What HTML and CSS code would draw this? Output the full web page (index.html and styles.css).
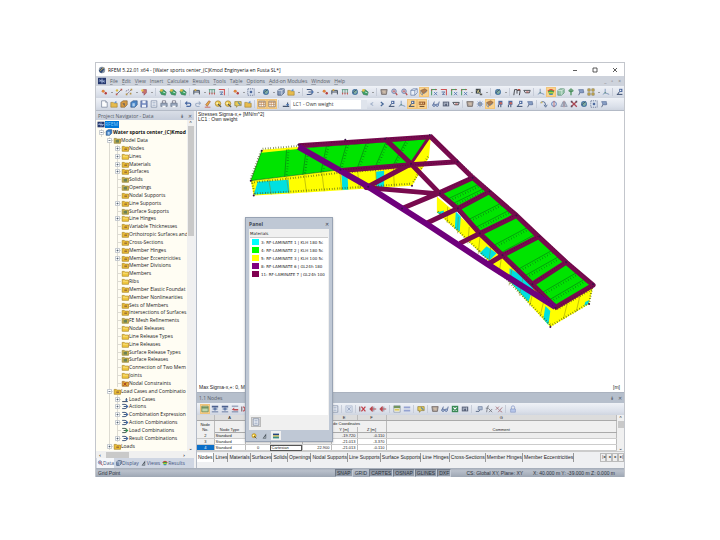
FILE: index.html
```html
<!DOCTYPE html>
<html lang="en">
<head>
<meta charset="utf-8">
<title>RFEM</title>
<link rel="stylesheet" href="styles.css">
</head>
<body>
<svg class="defs" aria-hidden="true">
  <symbol id="node" viewBox="0 0 10 10"><path d="M2 4l3-1 2 3" stroke="#aab" fill="none"/><circle cx="4" cy="4" r="1.8" fill="#e07a28"/><circle cx="7.200" cy="6.500" r="1.500" fill="#b02c2c"/></symbol>
  <symbol id="line" viewBox="0 0 10 10"><path d="M2 8L8 2" stroke="#6b6f78" stroke-width="1.200"/><circle cx="2.500" cy="3" r="1.500" fill="#d9b430"/><path d="M1 7h2v2H1zM7 1h2v2H7z" fill="#b84a3c"/></symbol>
  <symbol id="linedash" viewBox="0 0 10 10"><path d="M2 8L8 2M1 4l4-2" stroke="#657" stroke-dasharray="2 1"/><path d="M1 7h2v2H1zM7 1h2v2H7zM6 6h2v2H6z" fill="#b08a34"/></symbol>
  <symbol id="surf" viewBox="0 0 10 10"><path d="M4 2h4v4L5 9V6H3z" fill="#c8685a" stroke="#8b3b53" stroke-width=".8"/><circle cx="3" cy="3" r="1.500" fill="#e8c33a"/></symbol>
  <symbol id="green" viewBox="0 0 10 10"><path d="M1 4l4-2 4 3-1 4-5-1z" fill="#2f9a58" stroke="#20624a" stroke-width=".7"/><circle cx="3" cy="3" r="1.700" fill="#e6ba36"/><path d="M5 5l3 1" stroke="#fff" stroke-width=".8"/></symbol>
  <symbol id="member" viewBox="0 0 10 10"><path d="M1 8V3h7v5M1 5h7" stroke="#33404f" stroke-width="1.200" fill="none"/><circle cx="3" cy="2.500" r="1.300" fill="#dba52c"/></symbol>
  <symbol id="load" viewBox="0 0 10 10"><path d="M1 2h8M2 2v5M5 2v5M8 2v5" stroke="#3f8a68" stroke-width="1" fill="none"/><path d="M1 6h2L2 9zM4 6h2L5 9zM7 6h2L8 9z" fill="#c04444"/></symbol>
  <symbol id="box" viewBox="0 0 10 10"><path d="M1 3l3-2h5v5L6 9H1z" fill="#7d93b4" stroke="#304468" stroke-width=".9"/><path d="M1 3h5v6M6 3l3-2" stroke="#fff" stroke-width=".7" fill="none"/></symbol>
  <symbol id="wire" viewBox="0 0 10 10"><path d="M1 3l3-2h5v5L6 9H1zM1 3h5v6M6 3l3-2" stroke="#5872a0" stroke-width=".9" fill="#eef3fa"/></symbol>
  <symbol id="globe" viewBox="0 0 10 10"><circle cx="5" cy="5" r="3.700" fill="#33669a"/><path d="M2 4l4-2 2 3-3 3z" fill="#79a99b"/><path d="M2 6l5-4" stroke="#173354"/></symbol>
  <symbol id="logo" viewBox="0 0 10 10"><circle cx="5" cy="5" r="4" fill="#8b97a6"/><path d="M1 6l4-4 3 2-4 5z" fill="#2f4a75"/><path d="M3 6l4-4" stroke="#d8b24a" stroke-width="1.200"/></symbol>
  <symbol id="folder" viewBox="0 0 10 10"><path d="M1 3h3l1 1h4v5H1z" fill="#e7b73c" stroke="#94711c" stroke-width=".7"/><path d="M5 3l3-2v3" fill="#4e86c4"/></symbol>
  <symbol id="doc" viewBox="0 0 10 10"><path d="M2 1h5l2 2v6H2z" fill="#fff" stroke="#5e6b85" stroke-width=".8"/><path d="M7 1v2h2" fill="none" stroke="#5e6b85" stroke-width=".6"/></symbol>
  <symbol id="sheet" viewBox="0 0 10 10"><path d="M1.500 1h7v8h-7z" fill="#f5f7fb" stroke="#607090" stroke-width=".8"/><path d="M3 3h4M3 5h4M3 7h4" stroke="#7f92b4" stroke-width=".8"/></symbol>
  <symbol id="sel" viewBox="0 0 10 10"><path d="M1 1h8v8H1z" fill="#dfe6f1" stroke="#4a5c82" stroke-dasharray="1.500 1"/><path d="M3.500 3.500h3v3h-3z" fill="#3d5c96"/></symbol>
  <symbol id="cubeo" viewBox="0 0 10 10"><path d="M1 3l3-2h5v5L6 9H1z" fill="#d69330" stroke="#78501d" stroke-width=".8"/><path d="M3 4h3v4" fill="#5e554c"/></symbol>
  <symbol id="cubeb" viewBox="0 0 10 10"><path d="M1 3l3-2h5v5L6 9H1z" fill="#397bc4" stroke="#224776" stroke-width=".8"/><path d="M3 4h3v4H3z" fill="#acd0f0"/></symbol>
  <symbol id="cubeg" viewBox="0 0 10 10"><path d="M1 3l3-2h5v5L6 9H1z" fill="#8fc3a4" stroke="#3c7c5c" stroke-width=".8"/><path d="M1 3h5v6M6 3l3-2" stroke="#fff" stroke-width=".7" fill="none"/></symbol>
  <symbol id="save" viewBox="0 0 10 10"><path d="M1 1h8v8H1z" fill="#667fbb" stroke="#3e5288" stroke-width=".7"/><path d="M3 1h4v3H3zM2.500 6h5v3h-5z" fill="#edf1fa"/></symbol>
  <symbol id="print" viewBox="0 0 10 10"><path d="M3 1h4v3H3z" fill="#fff" stroke="#667"/><path d="M1 4h8v4H1z" fill="#91a0b8" stroke="#4d5b72" stroke-width=".7"/><path d="M3 7h4v2H3z" fill="#fff"/></symbol>
  <symbol id="undo" viewBox="0 0 10 10"><path d="M2 4h4.500q2 0 2 2t-2 2H3" stroke="#385b9b" stroke-width="1.500" fill="none"/><path d="M4 1L1 4l3 3z" fill="#385b9b"/></symbol>
  <symbol id="redo" viewBox="0 0 10 10"><path d="M8 4H4Q2 4 2 6t2 2h3" stroke="#9aaac4" stroke-width="1.300" fill="none"/><path d="M6 1l3 3-3 3z" fill="#9aaac4"/></symbol>
  <symbol id="pencil" viewBox="0 0 10 10"><path d="M2 6l4-5 2 1-4 6z" fill="#e7a632" stroke="#9b4b2b" stroke-width=".8"/><path d="M1 9h7" stroke="#c6423a" stroke-width="1"/></symbol>
  <symbol id="palette" viewBox="0 0 10 10"><circle cx="5" cy="4.500" r="3.500" fill="#efc73a" stroke="#9b7422" stroke-width=".8"/><path d="M5 5l4 4" stroke="#474747" stroke-width="1.400"/><circle cx="4" cy="4" r="1.200" fill="#fff5c4"/></symbol>
  <symbol id="note" viewBox="0 0 10 10"><path d="M1 2h8v5H5L3 9V7H1z" fill="#e7c847" stroke="#806c22" stroke-width=".8"/><path d="M5 3l3 3" stroke="#3577b5" stroke-width="1.300"/></symbol>
  <symbol id="table" viewBox="0 0 10 10"><path d="M1 1.500h8v7H1z" fill="#fff" stroke="#6c5f58" stroke-width=".9"/><path d="M1 3h8M1 5.500h8M4 2v6M7 2v6" stroke="#b07546" stroke-width=".8"/></symbol>
  <symbol id="tableg" viewBox="0 0 10 10"><path d="M1 1.500h8v7H1z" fill="#b8d8b0" stroke="#4f7a4c" stroke-width=".9"/><path d="M1 3.500h8" stroke="#4f7a4c" stroke-width="1.500"/></symbol>
  <symbol id="tablein" viewBox="0 0 10 10"><path d="M1 1h8v2H1zM1 8h8v1H1z" fill="#3b5284"/><path d="M2 5h6M5 3v4" stroke="#35558f" stroke-width="1.500"/></symbol>
  <symbol id="tabledel" viewBox="0 0 10 10"><path d="M1 1h8v1H1zM1 8h8v1H1z" fill="#445982"/><path d="M1 6l3-3v2h5v2H4z" fill="#bc3c40"/></symbol>
  <symbol id="lens" viewBox="0 0 10 10"><circle cx="5" cy="4" r="2.800" fill="#d9e7f5" stroke="#4b659a"/><path d="M7 6l2 3" stroke="#b33a3b" stroke-width="1.500"/><path d="M3 4h4M5 2v4" stroke="#b33" stroke-width=".8"/></symbol>
  <symbol id="hand" viewBox="0 0 10 10"><path d="M1 2h8L8 8H2z" fill="#a89a90" stroke="#504640" stroke-width=".8"/><path d="M3 4h4M4 6h3" stroke="#e8d0b0"/></symbol>
  <symbol id="view" viewBox="0 0 10 10"><path d="M1 3l5-2 3 2-5 4z" fill="#a9764a" stroke="#704525" stroke-width=".7"/><path d="M1 3v4l2 2V6M5 7l4-3" stroke="#6880a8" fill="none"/></symbol>
  <symbol id="axisx" viewBox="0 0 10 10"><path d="M2 9V2h6" stroke="#3e9955" stroke-width="1.300" fill="none"/><path d="M5 5l4 4M9 5L5 9" stroke="#3b65a8" stroke-width="1"/><path d="M1 3l1-2 1 2M7 1l2 1-2 1" fill="#b33"/></symbol>
  <symbol id="axisz" viewBox="0 0 10 10"><path d="M1 2h7v7" stroke="#c44" stroke-width="1.300" fill="none"/><path d="M2 5h4L3 8h3" stroke="#35558f" stroke-width="1" fill="none"/></symbol>
  <symbol id="axes" viewBox="0 0 10 10"><path d="M4 1v5l5 2M4 6L1 8" stroke="#7791b8" stroke-width="1.200" fill="none"/><circle cx="4" cy="6" r="1" fill="#587"/></symbol>
  <symbol id="contrast" viewBox="0 0 10 10"><path d="M1 1h6v6H1z" fill="#262f37"/><path d="M2 3l5 4M5 2L3 6" stroke="#e9dc8b"/><path d="M6 7h3v2H6z" fill="#444"/></symbol>
  <symbol id="rainbow" viewBox="0 0 10 10"><path d="M1 4q4-4 8 0L7 8H3z" fill="#2da44e"/><path d="M1 4q4-4 8 0" stroke="#d73b31" stroke-width="1.500" fill="none"/><path d="M2 6h6" stroke="#e9dc34" stroke-width="1.300"/><path d="M3 8h4" stroke="#2977d0" stroke-width="1.200"/></symbol>
  <symbol id="plant" viewBox="0 0 10 10"><path d="M5 9V2M2 3l3 2 3-2" stroke="#39874c" stroke-width="1.600" fill="none"/><path d="M3 2l2-1 2 1" fill="#39874c" stroke="#39874c"/></symbol>
  <symbol id="results" viewBox="0 0 10 10"><path d="M1 8h4l3-5" stroke="#50607e" stroke-width="1.200" fill="none"/><path d="M4 2h5v4H4z" fill="#a9b8d0" stroke="#5d7094" stroke-width=".8"/></symbol>
  <symbol id="support" viewBox="0 0 10 10"><path d="M4 1h4v4H4z" fill="#3d5c96"/><path d="M5 2l2 1-2 1" fill="#fff"/><path d="M1 8h7M4 5L2 8" stroke="#273c60" stroke-width="1.200"/></symbol>
  <symbol id="supportr" viewBox="0 0 10 10"><path d="M3 1h5v5H3z" fill="#3d5c96"/><circle cx="6" cy="4" r="1.600" fill="#c25a50"/><path d="M3 6v3M6 6v3" stroke="#273c60" stroke-width="1.200"/></symbol>
  <symbol id="struct" viewBox="0 0 10 10"><path d="M2 9l2-4M5 5h4" fill="none" stroke="#3e4f70"/><path d="M2 2h6v4H4z" fill="#7f97c0" stroke="#43598a" stroke-width=".7"/></symbol>
  <symbol id="values" viewBox="0 0 10 10"><path d="M1 2h8v4H1z" fill="#8f4d22"/><path d="M2 4h6" stroke="#ffe5a5" stroke-dasharray="1 1" stroke-width="2"/><path d="M2 8h6" stroke="#503928" stroke-width="1.300"/></symbol>
  <symbol id="frame" viewBox="0 0 10 10"><path d="M1 9L2 2h3v5M5 3h4L8 9" stroke="#34373e" stroke-width="1.200" fill="none"/><path d="M6 2h3" stroke="#bc4033" stroke-width="1.500"/></symbol>
  <symbol id="span" viewBox="0 0 10 10"><path d="M1 3h8M1 3l2 3h5l1-3" stroke="#40434a" stroke-width="1.200" fill="none"/><path d="M4 5h3" stroke="#bc4033" stroke-width="1.200"/></symbol>
  <symbol id="prev" viewBox="0 0 10 10"><path d="M6.500 3L3.500 5l3 2" stroke="#9fafc8" stroke-width="1.400" fill="none"/></symbol>
  <symbol id="next" viewBox="0 0 10 10"><path d="M3.500 2.500l3 2.500-3 2.500" stroke="#35598e" stroke-width="1.500" fill="none"/></symbol>
  <symbol id="xred" viewBox="0 0 10 10"><path d="M1.500 1.500l7 7M8.500 1.500l-7 7" stroke="#a73744" stroke-width="1.600"/><path d="M1 1h2v2H1zM7 1h2v2H7zM1 7h2v2H1z" fill="#4d3949"/></symbol>
  <symbol id="rowx" viewBox="0 0 10 10"><path d="M1 2v6" stroke="#6a4a50" stroke-width="1.300"/><path d="M3 2l5 6M8 2L3 8" stroke="#bd2b35" stroke-width="1.500"/></symbol>
  <symbol id="rowl" viewBox="0 0 10 10"><path d="M1 5l3-3v6zM3 5h6" fill="#b5343c" stroke="#b5343c" stroke-width="1.200"/><path d="M6 2v6" stroke="#778"/></symbol>
  <symbol id="colx" viewBox="0 0 10 10"><path d="M1 1h8v8H1z" fill="#d5ddeb" stroke="#a6b2c8" stroke-width=".8"/><path d="M3 3l4 4M7 3L3 7" stroke="#8797b5"/></symbol>
  <symbol id="rotate" viewBox="0 0 10 10"><path d="M1 4q0-2 3-2t3 5M5 6l2 3 2-3" stroke="#405a83" stroke-width="1.100" fill="none"/><circle cx="2" cy="3" r="1.200" fill="#c9b25a"/></symbol>
  <symbol id="target" viewBox="0 0 10 10"><circle cx="5" cy="5" r="3" fill="none" stroke="#5579b8" stroke-width="1.200"/><path d="M5 1v8" stroke="#b64d4c"/></symbol>
  <symbol id="cross" viewBox="0 0 10 10"><path d="M5 1v8M1 5h8M2 2l6 6M8 2L2 8" stroke="#5579b8" stroke-width=".9"/><circle cx="5" cy="5" r="1.500" fill="#fff" stroke="#345"/></symbol>
  <symbol id="mirror" viewBox="0 0 10 10"><path d="M5 1v8" stroke="#a44"/><path d="M4 2L1 8h3zM6 2l3 6H6z" fill="#cbd4e1" stroke="#66758f" stroke-width=".8"/></symbol>
  <symbol id="card" viewBox="0 0 10 10"><path d="M1 1h8v8H1z" fill="#f8f7e7" stroke="#74869f" stroke-width=".8"/><path d="M1 1h8v3H1z" fill="#668c4f"/><path d="M2 6h6" stroke="#dac64c" stroke-width="2"/></symbol>
  <symbol id="palt" viewBox="0 0 10 10"><path d="M1 1h3v3H1zM6 1h3v3H6zM1 6h3v3H1zM6 6h3v3H6z" fill="#d5b13c" stroke="#6d6440" stroke-width=".7"/></symbol>
  <symbol id="rows" viewBox="0 0 10 10"><path d="M1 2h8v2H1zM1 6h8v2H1z" fill="#8d9ccf"/></symbol>
  <symbol id="excel" viewBox="0 0 10 10"><path d="M1 1h8v8H1z" fill="#278044"/><path d="M3 3l4 4M7 3L3 7" stroke="#fff" stroke-width="1.300"/></symbol>
  <symbol id="glasses" viewBox="0 0 10 10"><path d="M1 7l2-5M8 6l1-4M4 6h1" stroke="#334d83"/><circle cx="2.500" cy="6.500" r="1.500" fill="#ccdcf4" stroke="#334d83"/><circle cx="6.500" cy="6.500" r="1.500" fill="#ccdcf4" stroke="#334d83"/></symbol>
  <symbol id="calc" viewBox="0 0 10 10"><path d="M1 2h8v6H1z" fill="#49536b"/><path d="M2 4h4M2 6h2M7 3v4" stroke="#d9e1ef"/></symbol>
  <symbol id="fx" viewBox="0 0 10 10"><path d="M5 1q-2 0-2 2L2 9M1 4h4M5 5l4 4M9 5L5 9" stroke="#63666f" stroke-width="1" fill="none"/></symbol>
  <symbol id="fxr" viewBox="0 0 10 10"><path d="M1 2l4 4M5 2L1 6M9 3L4 9M6 7l3 2" stroke="#a2626c" stroke-width="1" fill="none"/></symbol>
  <symbol id="lock" viewBox="0 0 10 10"><path d="M3 5V3q0-2 2-2t2 2v2" stroke="#8395c8" fill="none"/><path d="M2 5h6v4H2z" fill="#b3c4eb" stroke="#7488bd" stroke-width=".7"/></symbol>
  <symbol id="comb" viewBox="0 0 10 10"><path d="M1 2h4q3 0 3 3t-3 3H1M3 5h6" stroke="#334b76" stroke-width="1.300" fill="none"/><path d="M7 3l3 2-3 2z" fill="#3d6bb0"/></symbol>
  <symbol id="combg" viewBox="0 0 10 10"><path d="M1 2h4q3 0 3 3t-3 3H1M3 5h6" stroke="#3b5148" stroke-width="1.300" fill="none"/><path d="M6 3l4 2-4 2z" fill="#29974b"/></symbol>
  <symbol id="case" viewBox="0 0 10 10"><path d="M1 8h8M7 3v4" stroke="#35455f" stroke-width="1.400"/><path d="M5 5h4L7 8z" fill="#3768ab"/></symbol>
  <symbol id="app" viewBox="0 0 10 10"><path d="M0 1h10v8H0z" fill="#25386f"/><path d="M1 5h8M5 2v6M2 3l2 2M8 7L6 5" stroke="#b9cbed"/></symbol>
  <symbol id="foldy" viewBox="0 0 10 10"><path d="M1 2h3l1 1h5v6H1z" fill="#f0c73f" stroke="#a47e1a" stroke-width=".9"/><path d="M2 4h7v1H2z" fill="#fbe798"/></symbol>
  <symbol id="foldi" viewBox="0 0 10 10"><path d="M1 2h3l1 1h5v6H1z" fill="#eabb35" stroke="#a07a1a" stroke-width=".9"/><path d="M4 5h4v2H4z" fill="#9a6d35"/></symbol>
  <symbol id="foldg" viewBox="0 0 10 10"><path d="M1 2h3l1 1h5v6H1z" fill="#d0b548" stroke="#8c792d" stroke-width=".9"/><path d="M3 4h5v4H3z" fill="#6b8157"/></symbol>
  <symbol id="foldx" viewBox="0 0 10 10"><path d="M1 2h3l1 1h5v6H1z" fill="#e2a832" stroke="#9a5e1a" stroke-width=".9"/><path d="M3 4l4 4M7 4L3 8" stroke="#9c2b22" stroke-width="1.300"/></symbol>
  <symbol id="flag" viewBox="0 0 10 10"><path d="M0 1h10v3H0z" fill="#26457e"/><path d="M0 4h10v2H0z" fill="#e0c43d"/><path d="M0 6h10v3H0z" fill="#3e8d83"/></symbol>
  <symbol id="scale" viewBox="0 0 10 10"><path d="M1 9L7 1v8z" fill="#4a545d"/><path d="M3 8h3V5z" fill="#c8d0d8"/></symbol>
</svg>

<main class="window">
  <header class="title">
    <svg class="i"><use href="#logo"/></svg>
    <h1>RFEM 5.22.01 x64 - [Water sports center_(C)Kmod Enginyeria en Fusta SL*]</h1>
    <div class="wbtns">
      <button aria-label="Minimize"><svg viewBox="0 0 8 8"><path d="M2 4.500h4"/></svg></button>
      <button aria-label="Maximize"><svg viewBox="0 0 8 8"><path d="M2 2h4v4H2z"/></svg></button>
      <button aria-label="Close"><svg viewBox="0 0 8 8"><path d="M2 2l4 4M6 2L2 6"/></svg></button>
    </div>
  </header>
  <nav class="menu">
    <svg class="i"><use href="#app"/></svg>
    <button><u>F</u>ile</button><button><u>E</u>dit</button><button><u>V</u>iew</button><button><u>I</u>nsert</button><button><u>C</u>alculate</button><button><u>R</u>esults</button><button><u>T</u>ools</button><button>Ta<u>b</u>le</button><button><u>O</u>ptions</button><button><u>A</u>dd-on Modules</button><button><u>W</u>indow</button><button><u>H</u>elp</button>
    <span class="mdi"><span>_</span><span>▫</span><span>×</span></span>
  </nav>
  <div class="bar" data-icons="node v line linedash v surf v | green green green | member v load axisz | node v sel v globe v box folder v | comb v node member load globe green v | hand lens lens wire view* axisx axisz axisx axisx v contrast v | globe v | frame span | axes rainbow* cubeg plant struct palt v axes | support"></div>
  <div class="bar">
    <span class="part" data-icons="doc folder cubeo cubeb save sheet print print | undo redo pencil palette palette note folder | table* table* | case"></span>
    <select aria-label="Load case"><option>LC1 - Own weight</option></select>
    <span class="part" data-icons="prev next support axes support* values* | glasses calc span | hand cross view* supportr supportr support struct | rotate target mirror xred globe sel struct"></span>
  </div>

  <div class="work">
    <aside class="nav">
      <div class="cap"><h2>Project Navigator - Data</h2><span class="pin">⇟</span><span>✕</span></div>
      <div class="treebox">
        <ul class="tree" id="tree"></ul>
        <div class="vscroll"><b>⌃</b><i></i><b>⌄</b></div>
      </div>
      <div class="hscroll"><b>‹</b><i></i><b>›</b></div>
      <div class="navtabs">
        <button class="on"><svg class="i"><use href="#lens"/></svg>Data</button><button><svg class="i"><use href="#box"/></svg>Display</button><button><svg class="i"><use href="#scale"/></svg>Views</button><button><svg class="i"><use href="#rainbow"/></svg>Results</button>
      </div>
    </aside>

    <section class="right">
      <div class="view">
        <p class="info">Stresses Sigma-x,+ [MN/m^2]<br>LC1 : Own weight</p>
        <svg class="model" viewBox="196 110 429 276" role="img" aria-label="Structure model">
          <g class="yel">
            <path d="M250 180L340 169L411 163L412 185L290 193L253 195z"/>
            <path d="M409 163L431 135L429 157L412 185z"/>
            <path d="M437 196L480 233L505 256L533 285L556 308L594 286L590 304L551 327L528 302L507 278L480 252L457 230L437 212z"/>
          </g>
          <g class="cya">
            <path d="M253 194L257 181L288 179L289 192z"/><path d="M341 171L347 170L348 189L342 189z"/><path d="M376 171L384 170L384 186L376 187z"/>
            <path d="M437 212L444 210L444 216zM456 211L461 216L460 231L455 228zM487 246L497 253L490 260L480 253zM510 268L524 276L534 287L529 302L510 281zM546 306L551 311L549 325L544 319z"/>
            <path d="M586 302L590 300L589 304L585 306z"/>
          </g>
          <g class="gre">
            <path d="M261 150L427 138L411 163L340 169L250 180z"/><path d="M441 193L473 178L592 285L555 307z"/>
          </g>
          <path class="yel" d="M262 149L300 146V148L261 152z"/>
          <g id="hatch"></g>
          <g class="mag">
            <path d="M298 145L430 136M338 170L411 164L458 161M385 138L411 163L440 193L458 208L480 233L503 255L533 284L556 307"/>
            <path class="thin" d="M430 135L411 163"/>
            <path d="M411 163L366 187L437 193M430 135L473 177L517 215L540 237L567 262L594 285L555 308M402 208L440 192L473 177M426 223L458 208L490 191M460 243L480 233L517 215M488 264L503 255L540 236M533 284L567 262"/>
          </g>
          <path class="pur" d="M298 146L368 186L426 223L488 264L556 307"/>
          <g id="ticks"></g>
        </svg>
        <div class="foot"><span>Max Sigma-x,+: 0, Min Sigma-x,+: 0</span><span>[m]</span></div>
      </div>

      <section class="tbl">
        <div class="cap"><h2>1.1 Nodes</h2><span class="pin">⇟</span><span>✕</span></div>
        <div class="bar short" data-icons="tableg* tablein tablein tabledel rowx tabledel rowx tablein table rows card rows rows sheet | colx | rowx rowl rowl | card rows | note | hand glasses excel calc | results fx fxr | lock"></div>
        <div class="gridwrap">
          <table>
            <colgroup><col class="c0"><col class="c1"><col class="c2"><col class="c3"><col class="c4"><col class="c5"><col class="c6"><col></colgroup>
            <thead>
              <tr class="abc"><th></th><th>A</th><th>B</th><th>C</th><th>D</th><th>E</th><th>F</th><th>G</th></tr>
              <tr class="top"><th rowspan="2">Node<br>No.</th><th></th><th></th><th></th><th colspan="3" class="nc">Node Coordinates</th><th></th></tr>
              <tr class="top"><th>Node Type</th><th></th><th></th><th></th><th>Y [m]</th><th>Z [m]</th><th>Comment</th></tr>
            </thead>
            <tbody>
              <tr class="alt"><th>2</th><td>Standard</td><td></td><td></td><td></td><td class="n">-19.720</td><td class="n">-0.110</td><td></td></tr>
              <tr><th>3</th><td>Standard</td><td></td><td></td><td></td><td class="n">-21.013</td><td class="n">-3.370</td><td></td></tr>
              <tr><th class="cur">4</th><td>Standard</td><td class="m">0</td><td class="box">Cartesian</td><td class="n">22.900</td><td class="n">-21.013</td><td class="n">-0.110</td><td></td></tr>
            </tbody>
          </table>
          <div class="vscroll"><b>⌃</b><i></i><b>⌄</b></div>
        </div>
        <div class="tabs">
          <button class="on">Nodes</button><button>Lines</button><button>Materials</button><button>Surfaces</button><button>Solids</button><button>Openings</button><button>Nodal Supports</button><button>Line Supports</button><button>Surface Supports</button><button>Line Hinges</button><button>Cross-Sections</button><button>Member Hinges</button><button>Member Eccentricities</button>
          <span class="step"><button aria-label="First">|◂</button><button aria-label="Previous">◂</button><button aria-label="Next">▸</button><button aria-label="Last">▸|</button></span>
        </div>
      </section>
    </section>

    <section class="panel">
      <div class="phead"><h2>Panel</h2><span>✕</span></div>
      <div class="pbody">
        <h3>Materials</h3>
        <ul>
          <li><i class="k1"></i>3: RF-LAMINATE 1 | KLH 180 5c</li>
          <li><i class="k2"></i>4: RF-LAMINATE 2 | KLH 180 5c</li>
          <li><i class="k3"></i>5: RF-LAMINATE 3 | KLH 100 5c</li>
          <li><i class="k4"></i>8: RF-LAMINATE 6 | GL24h 180</li>
          <li><i class="k5"></i>11: RF-LAMINATE 7 | GL24h 100</li>
        </ul>
        <button class="opt" aria-label="Options"><svg class="i"><use href="#sheet"/></svg></button>
      </div>
      <div class="ptabs"><button aria-label="Colors"><svg class="i"><use href="#palette"/></svg></button><button aria-label="Factors"><svg class="i"><use href="#scale"/></svg></button><button class="on" aria-label="Filter"><svg class="i"><use href="#flag"/></svg></button></div>
    </section>
  </div>

  <footer class="status">
    <span class="hint">Grid Point</span>
    <span class="snaps"><button>SNAP</button><button class="off">GRID</button><button>CARTES</button><button>OSNAP</button><button>GLINES</button><button>DXF</button></span>
    <span class="cs">CS: Global XY, Plane: XY</span>
    <span class="xyz">X: 40.000 m Y: -39.000 m Z: 0.000 m</span>
  </footer>
</main>
<script src="app.js"></script>
</body>
</html>
```
FILE: styles.css
```css
* { box-sizing: border-box; }
body { margin: 0; padding: 62px 95px; background: #fff; font: 5px/6px "Open Sans", "Noto Sans", sans-serif; color: #333; }
h1, h2, h3, p, ul { margin: 0; padding: 0; font: inherit; list-style: none; }
button, select { font: inherit; color: inherit; border: 0; padding: 0; margin: 0; background: none; }
.defs { position: absolute; width: 0; height: 0; }
.i { width: 8px; height: 8px; flex: none; display: block; }

.window { border: 1px solid #c3c6cc; border-bottom: 0; background: #eff0f2; }
.title { display: flex; align-items: center; height: 13px; padding: 0 2px 0 2px; gap: 2px; background: #fff; color: #111; }
.title h1 { flex: 1; white-space: nowrap; }
.wbtns { display: flex; gap: 12px; padding-right: 3px; }
.wbtns button { display: block; width: 8px; height: 8px; }
.wbtns svg { display: block; fill: none; stroke: #333; stroke-width: .8; }
.menu { display: flex; align-items: center; height: 10px; padding-left: 2px; gap: 4px; background: #ced3dc; color: #555b66; }
.menu button { white-space: nowrap; }
.menu u { text-decoration-thickness: 1px; text-decoration-color: #9aa0aa; text-underline-offset: 1px; }
.mdi { margin-left: auto; display: flex; gap: 5px; padding-right: 3px; color: #777; }

.bar { display: flex; align-items: center; height: 12px; padding-left: 3px; overflow: hidden; background: linear-gradient(#eff2f7, #dbe0ea 70%, #cfd5e0); }
.bar .i { opacity: .9; }
.part { display: flex; align-items: center; }
.bar button { width: 10px; height: 10px; display: grid; place-items: center; flex: none; }
.bar button.hot { background: #fbd28c; box-shadow: inset 0 0 0 1px #f0c47a; }
.bar .v { width: 5px; height: 5px; flex: none; display: grid; place-items: center; }
.bar .v::before { content: ""; border: 1px solid transparent; border-top-color: #555; border-bottom: 0; }
.bar .s { width: 4px; height: 8px; flex: none; background: linear-gradient(90deg, transparent 1px, #c6ccd8 1px 2px, transparent 2px); }
.bar select { width: 76px; height: 9px; padding: 0 2px; background: #fff linear-gradient(#dfe4ec, #dfe4ec) right / 6px 100% no-repeat; appearance: none; color: #333; }

.work { display: flex; position: relative; border-top: 1px solid #b3bac6; }
.nav { width: 98px; flex: none; display: flex; flex-direction: column; }
.cap { display: flex; align-items: center; gap: 4px; height: 9px; padding: 0 2px; background: linear-gradient(#d9dee7, #c7cedb); color: #555b66; }
.cap h2 { flex: 1; white-space: nowrap; }
.treebox { display: flex; flex: 1; background: #fffdf3; }
.tree { flex: 1; min-width: 0; height: 330px; display: grid; grid-auto-rows: 1fr; overflow: hidden; padding: 1px 0 0 1px; }
.tree li { display: flex; align-items: center; white-space: nowrap; overflow: hidden; color: #222; }
.tree .i { height: 7px; }
.tree .t { padding: 0 1px 0 0; line-height: 7px; }
.tree .sel { background: #0078d7; color: #7fc3f5; }
.tree .b { font-weight: 700; color: #111; }
.l2 { padding-left: 8px; }
.l3 { padding-left: 16px; }
.l3.tail { background: linear-gradient(#dddbd2, #dddbd2) 12px 0 / 1px 100% no-repeat; }
.e { width: 8px; align-self: stretch; flex: none; display: grid; place-items: center; background: linear-gradient(#dddbd2, #dddbd2) 4px 0 / 1px 100% no-repeat, linear-gradient(#dddbd2, #dddbd2) 4px 50% / 4px 1px no-repeat; }
.e svg { width: 5px; height: 5px; display: block; fill: #fff; stroke: #a5acb8; }
.vscroll { width: 7px; flex: none; display: flex; flex-direction: column; align-items: center; background: #f0f0f0; color: #444; }
.vscroll b, .hscroll b { font: 700 5px/6px "DejaVu Sans", sans-serif; }
.vscroll i { width: 6px; height: 110px; background: #c9c9c9; }
.vscroll b:last-child { margin-top: auto; }
.hscroll { display: flex; align-items: center; height: 7px; padding: 0 9px 0 3px; gap: 5px; background: #f0f0f0; }
.hscroll i { width: 23px; height: 6px; background: #c9c9c9; }
.hscroll b:last-child { margin-left: auto; }
.navtabs { display: flex; align-items: center; height: 10px; padding: 0 1px; gap: 2px; background: #cfd6e3; color: #3f557f; }
.navtabs button { display: flex; align-items: center; height: 10px; }
.navtabs .i { width: 6px; height: 6px; }
.navtabs .on { background: #f4f6fa; }

.right { flex: 1; min-width: 0; margin-left: 2px; display: flex; flex-direction: column; border-left: 1px solid #b3bac6; }
.view { background: #fff; display: grid; }
.view > * { grid-area: 1 / 1; }
.info { font: 5px/5px "Liberation Sans", sans-serif; padding: 1px 1px; color: #222; }
.model { width: 100%; display: block; margin-bottom: 6px; }
.foot { align-self: end; display: flex; justify-content: space-between; padding: 0 4px 2px 2px; font: 5px/6px "Liberation Sans", sans-serif; color: #222; }
.yel { fill: #ff0; }
.cya { fill: #00e0e0; }
.gre { fill: #00e400; stroke: #0a4a0a; stroke-width: .5; }
.mag, .pur { fill: none; stroke: #780a4e; stroke-width: 5; stroke-linejoin: round; }
.mag .thin { stroke-width: 3; }
.pur { stroke: #6f007c; stroke-width: 6; }
#hatch path { fill: none; stroke: #0a5a1a; stroke-width: .5; }
#hatch .d { stroke-width: 2; stroke-dasharray: .4 2.4; }
#hatch .y { stroke: #8a8a10; }
#hatch .w { stroke-width: 2; stroke-dasharray: .6 2; stroke: #4c5a18; }
#ticks path { fill: none; stroke: #350c30; stroke-width: .5; stroke-dasharray: 1 1.6; }
#ticks circle { fill: #3a1048; }

.tbl { border-top: 1px solid #aab2bf; }
.tbl .cap { height: 10px; background: #b6bfcc; }
.gridwrap { display: flex; background: #f0f0f0; }
.gridwrap .vscroll i { height: 7px; }
table { flex: 1; min-width: 0; width: 100%; table-layout: fixed; border-collapse: collapse; font: 4px/5px "Liberation Sans", sans-serif; color: #222; }
th, td { padding: 0; overflow: hidden; white-space: nowrap; font-weight: 400; height: 6px; line-height: 5px; border-right: 1px solid #bbb; }
td { background: #fff; border-bottom: 1px solid #ccc; padding-left: 1px; }
th { background: #f0f0f0; }
tbody th { border-bottom: 1px solid #ccc; }
.abc th { background: #dcdcdc; border-bottom: 1px solid #aaa; }
.top th { border-bottom: 0; }
.top:nth-child(3) th { border-bottom: 1px solid #aaa; }
.alt td { background: #ededed; }
.n { text-align: right; padding-right: 1px; }
.m { text-align: center; }
.box { outline: 1px solid #555; outline-offset: -1px; }
.cur { background: #0b6fc8; color: #fff; }
.c0 { width: 17px; } .c1 { width: 31px; } .c2 { width: 25px; } .c3 { width: 32px; } .c4 { width: 29px; } .c5 { width: 26px; } .c6 { width: 29px; }
.tabs { display: flex; align-items: center; height: 17px; padding-bottom: 6px; font: 5px/6px "Liberation Sans", sans-serif; color: #222; border-top: 1px solid #ccc; }
.tabs button { height: 9px; padding: 0 0 0 1px; border-right: 1px solid #999; white-space: nowrap; }
.tabs .on { background: #fff; padding-right: 1px; }
.step { display: flex; margin-left: auto; }
.step button { width: 6px; font: 4px/6px "DejaVu Sans", sans-serif; border: 1px solid #bbb; background: #eee; }

.panel { position: absolute; left: 149px; top: 106px; width: 88px; display: flex; flex-direction: column; padding: 0 3px; background: #bfc8d5; border: 1px solid #98a3b4; box-shadow: 0 1px 2px #8888; }
.phead { display: flex; justify-content: space-between; align-items: center; height: 11px; color: #3d4654; }
.phead h2 { font-weight: 700; }
.pbody { background: #f0f0f0; padding: 2px 1px; font: 4px/5px "DejaVu Sans", sans-serif; color: #222; }
.pbody h3 { line-height: 6px; }
.pbody ul { display: flex; flex-direction: column; gap: 2px; height: 178px; padding: 1px 2px; background: #fff; border-top: 1px solid #ccc; }
.pbody li { display: flex; align-items: center; gap: 2px; height: 6px; white-space: nowrap; }
.pbody li i { width: 7px; height: 6px; flex: none; }
.k1 { background: #00ffff; } .k2 { background: #00ff00; } .k3 { background: #ffff00; } .k4 { background: #800080; } .k5 { background: #800050; }
.opt { display: grid; place-items: center; width: 10px; height: 10px; margin: 2px 0 1px 1px; background: #ddd; border: 1px solid #bbb; }
.ptabs { display: flex; gap: 1px; height: 11px; align-items: center; }
.ptabs button { display: grid; place-items: center; width: 10px; height: 9px; }
.ptabs .i { width: 6px; height: 6px; }
.ptabs .on { background: #f0f0f0; }

.status { display: flex; align-items: center; height: 9px; padding: 0 9px 0 2px; background: linear-gradient(#a4acb8, #b9c0cb 30%, #9ea7b4); font: 5px/6px "Liberation Sans", sans-serif; color: #2c323b; }
.hint { width: 237px; flex: none; }
.snaps { display: flex; }
.snaps button { height: 8px; padding: 0 1px; background: #929ba8; border: 1px solid #707987; border-right-color: #c5ccd6; border-bottom-color: #c5ccd6; }
.snaps .off { background: none; border-color: transparent; }
.cs { margin: 0 10px 0 auto; white-space: nowrap; }
.xyz { white-space: nowrap; }
```
FILE: app.js
```js
// Toolbars: icon ids, "v" = drop-down arrow, "|" = separator, trailing "*" = pressed
const use = id => `<svg class="i"><use href="#${id}"/></svg>`;
document.querySelectorAll('[data-icons]').forEach(bar => {
  bar.innerHTML = bar.dataset.icons.split(' ').map(t => {
    if (t === 'v') return '<span class="v"></span>';
    if (t === '|') return '<span class="s"></span>';
    const hot = t.endsWith('*'), id = t.replace('*', '');
    return `<button aria-label="${id}"${hot ? ' class="hot"' : ''}>${use(id)}</button>`;
  }).join('');
});

// Navigator rows: level, expander, icon, label
const rows = `0  app RFEM
1 - cubeb Water sports center_(C)Kmod
2 - foldg Model Data
3 + foldi Nodes
3 + foldy Lines
3 + foldi Materials
3 + foldi Surfaces
3 . foldg Solids
3 . foldg Openings
3 . foldi Nodal Supports
3 + foldi Line Supports
3 . foldg Surface Supports
3 + foldy Line Hinges
3 . foldi Variable Thicknesses
3 . foldi Orthotropic Surfaces and
3 . foldi Cross-Sections
3 + foldi Member Hinges
3 + foldi Member Eccentricities
3 . foldi Member Divisions
3 . foldy Members
3 . foldy Ribs
3 . foldi Member Elastic Foundat
3 . foldy Member Nonlinearities
3 . foldi Sets of Members
3 . foldi Intersections of Surfaces
3 . foldg FE Mesh Refinements
3 . foldy Nodal Releases
3 . foldy Line Release Types
3 . foldy Line Releases
3 . foldg Surface Release Types
3 . foldg Surface Releases
3 . foldy Connection of Two Mem
3 . foldy Joints
3 . foldx Nodal Constraints
2 - foldi Load Cases and Combinatio
3 + case Load Cases
3 + comb Actions
3 + comb Combination Expression
3 + comb Action Combinations
3 . combg Load Combinations
3 + comb Result Combinations
2 + foldi Loads`.split('\n');
document.getElementById('tree').innerHTML = rows.map(r => {
  const [, lv, ex, icon, text] = r.match(/^(\d) (\S?) ?(\S+) (.*)$/);
  const sign = ex === '+' ? 'M1.500 2.500h2M2.500 1.500v2' : 'M1.500 2.500h2';
  const knob = ex === '.' ? '' : `<svg viewBox="0 0 5 5"><path d="M.5.5h4v4h-4z" stroke-width=".6"/><path d="${sign}" stroke="#456" stroke-width=".7"/></svg>`;
  const exp = lv === '0' ? '' : `<span class="e">${knob}</span>`;
  const cls = lv === '0' ? ' sel' : lv === '1' ? ' b' : '';
  return `<li class="l${lv}${lv === '3' ? ' tail' : ''}">${exp}${use(icon)}<span class="t${cls}">${text}</span></li>`;
}).join('');

// Member ribs on the roof and wall surfaces, interpolated between two edges
const mix = (a, b, t) => [a[0] + (b[0] - a[0]) * t, a[1] + (b[1] - a[1]) * t];
const seg = (a, b, c = '') => `<path class="${c}" d="M${a.map(n => n.toFixed(1))}L${b.map(n => n.toFixed(1))}"/>`;
function ribs(a, b, c, d, n, wall) {
  let s = '';
  for (let k = 1; k < n; k++) {
    const p = mix(a, b, k / n), q = mix(c, d, k / n);
    s += seg(p, q, wall ? 'y' : '');
    if (!wall) s += seg([p[0] + 2, p[1]], [q[0] + 2, q[1]], 'd');
  }
  return s;
}
let h = ribs([266, 150], [426, 138], [266, 178], [411, 163], 8);
const cuts = [[0, .13], [.15, .36], [.38, .58], [.6, .78], [.8, 1]];
cuts.forEach(([s, e]) => {
  for (const f of [.4, .72]) {
    const t = s + (e - s) * f;
    const a = mix([441, 193], [555, 307], t), b = mix([473, 178], [592, 285], t);
    h += seg(a, b) + seg([a[0] + 1, a[1] + 2], [b[0] + 1, b[1] + 2], 'd');
  }
});
h += ribs([250, 180], [411, 163], [253, 195], [412, 185], 9, true);
h += ribs([437, 196], [556, 308], [437, 212], [551, 327], 11, true);
h += ribs([556, 308], [594, 286], [551, 327], [590, 304], 3, true);
[[[262, 148], [300, 145]], [[251, 182], [340, 172]], [[254, 193], [290, 191]], [[290, 191], [412, 183]], [[344, 172], [411, 166]],
 [[438, 211], [480, 251]], [[480, 251], [551, 325]], [[551, 326], [590, 303]], [[558, 309], [593, 289]],
 [[428, 156], [413, 182]], [[251, 180], [254, 195]], [[593, 288], [590, 303]], [[250, 178], [260, 151]]]
  .forEach(([a, b]) => { h += seg(a, b, 'w'); });
document.getElementById('hatch').innerHTML = h;

let t = '';
[[[297, 144], [430, 135]], [[340, 169], [458, 161]], [[430, 134], [594, 284]], [[440, 193], [555, 307]], [[594, 286], [556, 308]],
 [[440, 191], [473, 176]], [[458, 207], [490, 190]], [[480, 232], [517, 214]], [[503, 254], [540, 235]], [[533, 283], [567, 261]]]
  .forEach(([a, b]) => { t += seg(a, b); });
[[250, 180], [261, 150], [253, 195], [298, 144], [345, 139], [385, 138], [430, 134], [340, 169], [411, 163], [458, 161], [473, 177], [368, 186],
 [440, 193], [490, 191], [458, 208], [517, 215], [480, 233], [540, 236], [503, 255], [567, 262], [533, 284], [594, 284], [556, 308], [402, 208], [551, 327], [590, 304], [412, 185]]
  .forEach(([x, y]) => { t += `<circle cx="${x}" cy="${y}" r="1"/>`; });
document.getElementById('ticks').innerHTML = t;
```
